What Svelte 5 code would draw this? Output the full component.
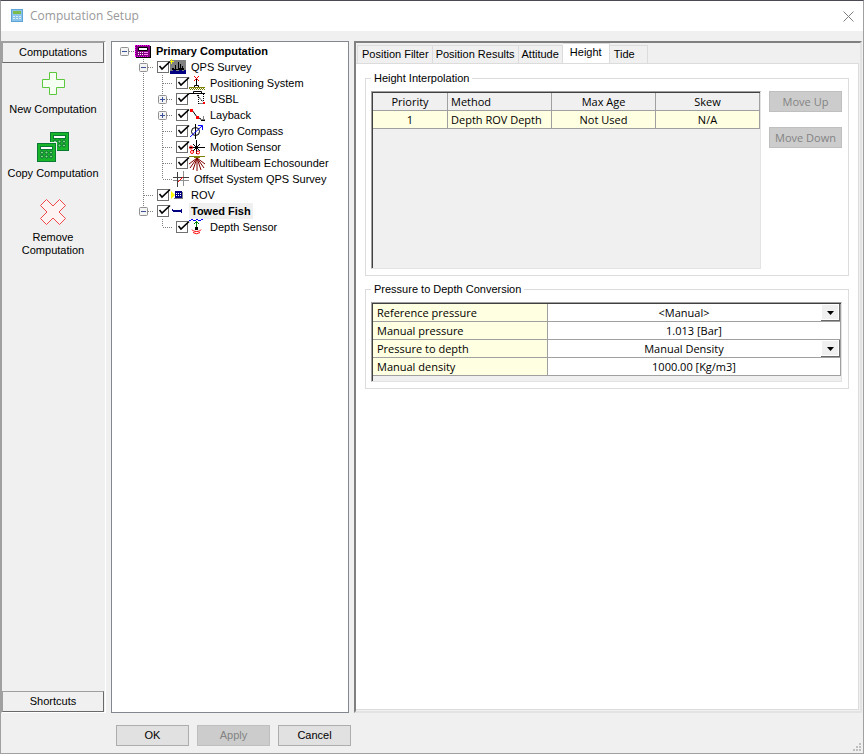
<script lang="ts">
    type Node = {
        label: string;
        icon: string;
        guides: string[];
        check: boolean;
        bold?: boolean;
        selected?: boolean;
    };

    // guides: one cell per level, v = through, t = tee, l = last, + and - = box
    const nodes: Node[] = [
        { label: "Primary Computation", icon: "root", guides: ["r-"], check: false, bold: true },
        { label: "QPS Survey", icon: "vessel", guides: ["", "t-"], check: true },
        { label: "Positioning System", icon: "position", guides: ["", "v", "t"], check: true },
        { label: "USBL", icon: "usbl", guides: ["", "v", "t+"], check: true },
        { label: "Layback", icon: "layback", guides: ["", "v", "t+"], check: true },
        { label: "Gyro Compass", icon: "gyro", guides: ["", "v", "t"], check: true },
        { label: "Motion Sensor", icon: "motion", guides: ["", "v", "t"], check: true },
        { label: "Multibeam Echosounder", icon: "multibeam", guides: ["", "v", "t"], check: true },
        { label: "Offset System QPS Survey", icon: "offset", guides: ["", "v", "l"], check: false },
        { label: "ROV", icon: "rov", guides: ["", "t"], check: true },
        { label: "Towed Fish", icon: "fish", guides: ["", "l-"], check: true, bold: true, selected: true },
        { label: "Depth Sensor", icon: "depth", guides: ["", "", "l"], check: true },
    ];

    const tabs = ["Position Filter", "Position Results", "Attitude", "Height", "Tide"];

    let current = $state("Height");
    let checked = $state(nodes.map((n) => n.check));
    let pressure = $state("1.013 [Bar]");
    let density = $state("1000.00 [Kg/m3]");
</script>

{#snippet guide(kind: string)}
    <svg class="guide" width="19" height="16" viewBox="0 0 19 16">
        <g stroke="#808080" stroke-dasharray="1 1">
            {#if kind[0] == "v" || kind[0] == "t"}
                <path d="M9.5 0V16" />
            {:else if kind[0] == "l"}
                <path d="M9.5 0V8" />
            {/if}
            {#if kind && kind[0] != "v"}
                <path d="M10 8.5H19" />
            {/if}
        </g>
        {#if kind[1]}
            <rect x="5.5" y="4.5" width="8" height="8" rx="1" fill="#f4f4f4" stroke="#919191" />
            <path d="M7 8.5H12" stroke="#3b5298" />
        {/if}
        {#if kind[1] == "+"}
            <path d="M9.5 6V11" stroke="#3b5298" />
        {/if}
    </svg>
{/snippet}

{#snippet nodeIcon(name: string)}
    <svg class="icon" width="16" height="16" viewBox="0 0 16 16" fill="none">
        {#if name == "root"}
            <path d="M1 3H16V15H1z" fill="#000" />
            <path d="M0 2H15V14H0z" fill="#800080" />
            <path d="M0 2.5H15M.5 2V14M0 13.5H14" stroke="#f0f" stroke-dasharray="1 1" />
            <path d="M3.5 4.5H12.5V7.5H3.5z" fill="#fff" stroke="#000" />
            <path d="M3 9.5H8M3 11.5H8" stroke="#fff" stroke-dasharray="1 1" />
            <path d="M9 9.5H13M9 11.5H13" stroke="#f8f" />
        {:else if name == "vessel"}
            <path d="M0 1H16V14H0z" fill="#808080" />
            <path d="M2 11V9H4V10H5V6H6V10H8V3H9V9H10V5H11V9H12V7H13V9H14V11z" fill="#000" />
            <path d="M0 12H3V11H6V12H9V11H12V12H14V11H16V15H0z" fill="#000080" />
            <path d="M1.5 0V5M0 2.5H4" stroke="#ff0" />
        {:else if name == "position"}
            <path d="M5 1L10 6M10 1L5 6" stroke="#f00" />
            <path d="M7.5 4V11M5.5 12V10.5H9.5V12" stroke="#000" />
            <path d="M0 12.5H16" stroke="#808000" />
            <path d="M0 13.5H16" stroke="#808000" stroke-dasharray="1 1" />
            <path d="M1 14.5H16" stroke="#808000" stroke-dasharray="1 1" />
        {:else if name == "usbl"}
            <path d="M0 2.5H16M4.5 2V.5H12.5V2" stroke="#000" />
            <path d="M9.5 4V13M9.5 12.5H14M14.5 3V11" stroke="#000" stroke-dasharray="1 1" />
            <path d="M8 4L14 11" stroke="#000" stroke-dasharray="2 1" />
            <path d="M14 11H16V13H14z" fill="#f00" />
        {:else if name == "layback"}
            <path d="M3 3L8 10L12 12" stroke="#000" />
            <path d="M1 2H4V5H1zM7 9H10V12H7z" fill="#f00" />
            <path d="M11 12.5H16M14.5 9V13" stroke="#808080" />
            <path d="M12 13.5H16" stroke="#000" />
        {:else if name == "gyro"}
            <circle cx="6.5" cy="8.5" r="4" stroke="#000" />
            <path d="M6.5 1V16" stroke="#000" />
            <path d="M1 14L13 3M9 2.5H13.5V7" stroke="#00f" />
        {:else if name == "motion"}
            <path d="M7.5 1V15M0 8.5H16M4 5L11 12M11 5L4 12" stroke="#000" />
            <path d="M6 7H9V10H6z" fill="#000" />
            <circle cx="2" cy="8.5" r="1.5" stroke="#f00" />
            <circle cx="3" cy="13" r="1.5" stroke="#f00" />
            <circle cx="9" cy="13.5" r="1.5" stroke="#f00" />
        {:else if name == "multibeam"}
            <path d="M0 1.5H16M5 2.5H11" stroke="#808000" />
            <path d="M8 3L0 9M8 3L1 13M8 3L4 15M8 3V16M8 3L12 15M8 3L15 13M8 3L16 9" stroke="#800000" />
        {:else if name == "offset"}
            <path d="M10.5 0V15M0 9.5H16" stroke="#909090" />
            <path d="M4.5 1V16M0 6.5H16" stroke="#404040" />
            <path d="M5 11L10 6" stroke="#f00" />
        {:else if name == "rov"}
            <path d="M1 4L5 8L1 12z" fill="#ff0" />
            <path d="M5 4H12V11H5z" fill="#000080" />
            <path d="M6 6.5H11M6 8.5H11" stroke="#fff" stroke-dasharray="1 1" />
            <path d="M4 11.5H13M12.5 5V11" stroke="#808080" />
        {:else if name == "fish"}
            <path d="M3 7H11V9H3z" fill="#000080" />
            <path d="M2.5 6V8M11.5 6V10" stroke="#000080" />
        {:else if name == "depth"}
            <path d="M0 1.5H2M2 .5H4M4 1.5H7M7 .5H9M9 1.5H12M12 .5H14" stroke="#00f" />
            <path d="M7.5 2V8M5 5L7.5 2.5L10 5" stroke="#008000" />
            <path d="M6 8H9V11H6z" fill="#000" />
            <path d="M3 10.5Q3.5 12.5 7.5 12.5T12 10.5M4 13.5Q7.5 16 11 13.5" stroke="#f00" />
        {/if}
    </svg>
{/snippet}

{#snippet calc(x: number, y: number)}
    <g transform="translate({x} {y})">
        <rect x=".5" y=".5" width="18" height="18" fill="#18b52a" stroke="#0a7a35" />
        <rect x="3.5" y="3.5" width="12" height="3" fill="#fff" stroke="#0a7a35" />
        {#each [9.5, 13.5] as cy}
            {#each [5, 9.5, 14] as cx}
                <circle {cx} {cy} r="1.5" fill="#7fdc7f" stroke="#0a6a35" />
            {/each}
        {/each}
    </g>
{/snippet}

<div class="window">
    <header>
        <svg width="14" height="14" viewBox="0 0 14 14">
            <rect x="1.5" y=".5" width="11" height="12" fill="#8cc4ea" stroke="#5ea4d8" />
            <rect x="3" y="2" width="8" height="3" fill="#7cbc4c" />
            <path d="M3 7.5H11M3 9.5H11" stroke="#d8ecf8" stroke-dasharray="2 1" />
        </svg>
        <h1>Computation Setup</h1>
        <button class="close" aria-label="Close">
            <svg width="11" height="11" viewBox="0 0 11 11"><path d="M.5 .5L10.5 10.5M10.5 .5L.5 10.5" stroke="#808080" /></svg>
        </button>
    </header>

    <main>
        <nav>
            <button class="bar">Computations</button>
            <div class="actions">
                <button class="action">
                    <svg width="32" height="32" viewBox="0 0 32 32">
                        <path d="M12.5 4.5H19.5V11.5H27.5V19.5H19.5V26.5H12.5V19.5H5.5V11.5H12.5z" fill="#f5fff2" stroke="#5cc83c" />
                    </svg>
                    New Computation
                </button>
                <button class="action">
                    <svg width="32" height="32" viewBox="0 0 32 32">
                        {@render calc(13, 0)}
                        <path d="M0 10H20V31H0z" fill="#f0f0f0" />
                        {@render calc(0, 11)}
                    </svg>
                    Copy Computation
                </button>
                <button class="action">
                    <svg width="32" height="32" viewBox="0 0 32 32">
                        <path d="M9.5 3.5L16 10L22.5 3.5L28.5 9.5L22 16L28.5 22.5L22.5 28.5L16 22L9.5 28.5L3.5 22.5L10 16L3.5 9.5z" fill="#fdf3f3" stroke="#ee4848" />
                    </svg>
                    Remove Computation
                </button>
            </div>
            <button class="bar">Shortcuts</button>
        </nav>

        <ul class="tree">
            {#each nodes as node, i}
                <li>
                    {#each node.guides as kind}
                        {@render guide(kind)}
                    {/each}
                    <label class:bold={node.bold}>
                        {#if node.check}
                            <input type="checkbox" bind:checked={checked[i]} />
                        {/if}
                        {@render nodeIcon(node.icon)}
                        <span class:selected={node.selected}>{node.label}</span>
                    </label>
                </li>
            {/each}
        </ul>

        <section class="panel">
            <div class="tabs" role="tablist">
                {#each tabs as tab}
                    <button role="tab" class="tab" class:active={tab == current} aria-selected={tab == current} onclick={() => (current = tab)}>
                        {tab}
                    </button>
                {/each}
            </div>

            <div class="page">
                <fieldset>
                    <legend>Height Interpolation</legend>
                    <div class="interpolation">
                        <div class="grid list">
                            <table>
                                <thead>
                                    <tr><th>Priority</th><th class="left">Method</th><th>Max Age</th><th>Skew</th></tr>
                                </thead>
                                <tbody>
                                    <tr><td>1</td><td class="left">Depth ROV Depth</td><td>Not Used</td><td>N/A</td></tr>
                                </tbody>
                            </table>
                        </div>
                        <div class="moves">
                            <button class="btn" disabled>Move Up</button>
                            <button class="btn" disabled>Move Down</button>
                        </div>
                    </div>
                </fieldset>

                <fieldset>
                    <legend>Pressure to Depth Conversion</legend>
                    <div class="grid props">
                        <div class="prop">
                            <label for="reference">Reference pressure</label>
                            <select id="reference"><option>&lt;Manual&gt;</option></select>
                        </div>
                        <div class="prop">
                            <label for="pressure">Manual pressure</label>
                            <input id="pressure" type="text" bind:value={pressure} />
                        </div>
                        <div class="prop">
                            <label for="depth">Pressure to depth</label>
                            <select id="depth"><option>Manual Density</option></select>
                        </div>
                        <div class="prop">
                            <label for="density">Manual density</label>
                            <input id="density" type="text" bind:value={density} />
                        </div>
                    </div>
                </fieldset>
            </div>
        </section>
    </main>

    <footer>
        <button class="btn">OK</button>
        <button class="btn" disabled>Apply</button>
        <button class="btn">Cancel</button>
        <svg class="grip" width="8" height="8" viewBox="0 0 8 8" fill="#bfbfbf">
            <path d="M6 0H8V2H6zM3 3H5V5H3zM6 3H8V5H6zM0 6H2V8H0zM3 6H5V8H3zM6 6H8V8H6z" />
        </svg>
    </footer>
</div>

<style>
    :global(body) {
        margin: 0;
    }

    .window {
        display: flex;
        flex-direction: column;
        box-sizing: border-box;
        min-height: 100vh;
        border: 1px solid #a0a0a0;
        border-top-color: #4a4a55;
        background: #f0f0f0;
        color: #000;
        font: 11px/13px "Liberation Sans", Arial, sans-serif;
    }

    button,
    input,
    select {
        margin: 0;
        padding: 0;
        border: 0;
        border-radius: 0;
        background: none;
        color: inherit;
        font: inherit;
    }

    header {
        display: flex;
        align-items: center;
        height: 30px;
        padding: 0 9px;
        background: #fff;
    }

    h1 {
        flex: 1;
        margin: 0 0 0 6px;
        color: #999;
        font: 12px/16px "Open Sans", "Segoe UI", sans-serif;
    }

    .close {
        display: flex;
    }

    main {
        display: grid;
        grid-template-columns: 105px 238px 1fr;
        gap: 5px;
        flex: 1;
        padding: 10px 1px 0 0;
    }

    nav {
        display: flex;
        flex-direction: column;
        box-sizing: border-box;
        border: 1px solid #a0a0a0;
        border-right-color: #fff;
        border-bottom-color: #fff;
    }

    .bar {
        height: 21px;
        border: 1px solid #696969;
        border-top-color: #a0a0a0;
        border-left-color: #a0a0a0;
        margin-right: 1px;
    }

    .actions {
        display: flex;
        flex: 1;
        flex-direction: column;
        align-items: center;
        gap: 16px;
        padding: 5px 1px 0 0;
    }

    .action {
        display: flex;
        flex-direction: column;
        align-items: center;
        gap: 3px;
        width: 100%;
    }

    .tree {
        box-sizing: border-box;
        margin: 0;
        padding: 1px 3px;
        border: 1px solid #828790;
        background: #fff;
        list-style: none;
    }

    .tree li {
        display: flex;
        height: 16px;
    }

    .guide,
    .icon {
        flex: none;
    }

    .tree label {
        display: flex;
        align-items: center;
        padding-left: 1px;
        white-space: nowrap;
    }

    .tree span {
        padding: 0 2px;
        margin-left: 3px;
        line-height: 16px;
    }

    .bold {
        font-weight: bold;
    }

    .selected {
        background: #f0f0f0;
    }

    .tree input {
        appearance: none;
        flex: none;
        width: 14px;
        height: 14px;
        margin-left: 3px;
        margin-right: -1px;
        background: url("data:image/svg+xml,%3Csvg xmlns='http://www.w3.org/2000/svg' width='14' height='14'%3E%3Crect x='.5' y='1.5' width='11' height='11' fill='white' stroke='%23707070'/%3E%3C/svg%3E");
    }

    .tree input:checked {
        background: url("data:image/svg+xml,%3Csvg xmlns='http://www.w3.org/2000/svg' width='14' height='14'%3E%3Crect x='.5' y='1.5' width='11' height='11' fill='white' stroke='%23707070'/%3E%3Cpath d='M2.5 6L5 9L13 1.5' fill='none' stroke='black' stroke-width='1.6'/%3E%3C/svg%3E");
    }

    .panel {
        display: flex;
        flex-direction: column;
        min-width: 0;
        padding: 0 1px 1px 0;
        border: 2px solid;
        border-color: #808080 #e3e3e3 #e3e3e3 #808080;
    }

    .tabs {
        display: flex;
        align-items: flex-end;
        height: 20px;
        padding-left: 1px;
    }

    .tab {
        height: 18px;
        padding: 0 3px;
        border: 1px solid #dcdcdc;
        border-bottom: 0;
        border-left-width: 0;
    }

    .tab:first-child {
        border-left-width: 1px;
        padding-left: 4px;
    }

    .tab:last-child {
        padding: 0 12px 0 4px;
    }

    .tab.active {
        height: 21px;
        margin-bottom: -1px;
        padding: 0 7px 3px;
        background: #fff;
    }

    .page {
        display: flex;
        flex: 1;
        flex-direction: column;
        gap: 7px;
        padding: 8px 9px;
        border: 1px solid #dcdcdc;
        border-left: 0;
        background: #fff;
    }

    fieldset {
        min-width: 0;
        margin: 0;
        padding: 6px 6px 6px 5px;
        border: 1px solid #dcdcdc;
    }

    legend {
        padding: 0 3px;
    }

    .interpolation {
        display: flex;
        gap: 8px;
    }

    .grid {
        box-sizing: border-box;
        padding: 1px 0 0 1px;
        border: 1px solid;
        border-color: #a0a0a0 #e3e3e3 #e3e3e3 #a0a0a0;
        background: #f0f0f0;
        box-shadow: inset 1px 1px #404040;
        font: 11px/17px "Open Sans", "Segoe UI", sans-serif;
    }

    .list {
        flex: 1;
        height: 178px;
    }

    table {
        width: 100%;
        border-collapse: separate;
        border-spacing: 0;
        table-layout: fixed;
    }

    th,
    td {
        height: 17px;
        padding: 0 3px;
        border: solid #a0a0a0;
        border-width: 0 1px 1px 0;
        font-weight: normal;
        text-align: center;
        white-space: nowrap;
    }

    th:first-child {
        width: 68px;
    }

    td {
        background: #ffffe1;
    }

    th.left,
    td.left {
        text-align: left;
    }

    .btn {
        box-sizing: border-box;
        width: 73px;
        height: 21px;
        border: 1px solid #adadad;
        background: #e1e1e1;
    }

    .btn:disabled {
        border-color: #bfbfbf;
        background: #ccc;
        color: #838383;
    }

    .moves {
        display: flex;
        flex-direction: column;
        gap: 15px;
    }

    .moves .btn {
        font: 11px/17px "Open Sans", "Segoe UI", sans-serif;
    }

    .props {
        padding-bottom: 5px;
    }

    .prop {
        display: grid;
        grid-template-columns: 175px 1fr;
        height: 18px;
    }

    .prop label {
        padding-left: 4px;
        background: #ffffe1;
    }

    .prop label,
    .prop input,
    .prop select {
        box-sizing: border-box;
        min-width: 0;
        height: 18px;
        border: solid #a0a0a0;
        border-width: 0 1px 1px 0;
    }

    .prop input,
    .prop select {
        background: #fff;
        text-align: center;
        text-align-last: center;
    }

    .prop select {
        appearance: none;
        padding-right: 20px;
        background: #fff url("data:image/svg+xml,%3Csvg xmlns='http://www.w3.org/2000/svg' width='19' height='17'%3E%3Cpath d='M0 0H19V17H0z' fill='%23696969'/%3E%3Cpath d='M0 0H18V16H0z' fill='%23fff'/%3E%3Cpath d='M1 1H17V15H1z' fill='%23f0f0f0'/%3E%3Cpath d='M6 7H13L9.5 11z'/%3E%3C/svg%3E") no-repeat right top;
    }

    footer {
        display: flex;
        gap: 8px;
        padding: 12px 2px 7px 115px;
    }

    .grip {
        align-self: flex-end;
        margin: 0 0 -5px auto;
    }
</style>
